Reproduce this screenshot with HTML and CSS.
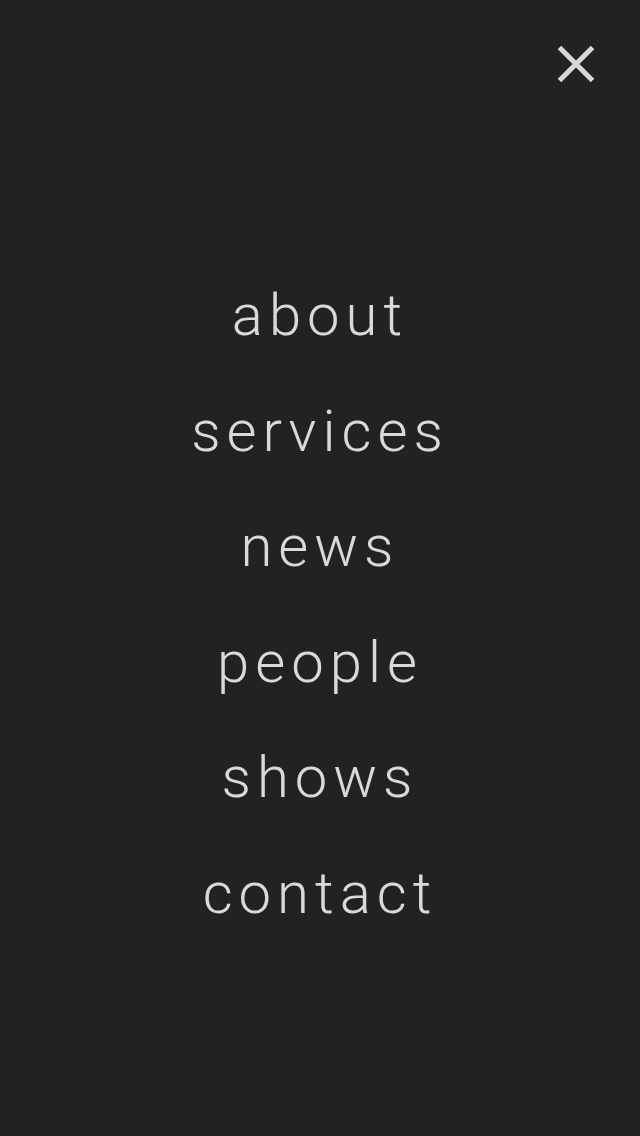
FILE: index.html
```html
<!DOCTYPE html>
<html lang="en">
<head>
<meta charset="utf-8">
<title>Menu</title>
<link rel="stylesheet" href="styles.css">
</head>
<body>
<div class="overlay">
  <header class="top">
    <button class="close" aria-label="Close menu">
      <svg width="40" height="40" viewBox="0 0 40 40"><path d="M3.5 3.5 L36.5 36.5 M36.5 3.5 L3.5 36.5" stroke="#d9d9d9" stroke-width="5" stroke-linecap="butt" fill="none"/></svg>
    </button>
  </header>
  <nav class="menu">
    <a class="item" href="#">about</a>
    <a class="item" href="#">services</a>
    <a class="item" href="#">news</a>
    <a class="item" href="#">people</a>
    <a class="item" href="#">shows</a>
    <a class="item" href="#">contact</a>
  </nav>
</div>
</body>
</html>
```
FILE: styles.css
```css
html, body {
  margin: 0;
  padding: 0;
  background: #222222;
}
.overlay {
  width: 640px;
  height: 1136px;
  display: flex;
  flex-direction: column;
  background: #222222;
}
.top {
  display: flex;
  justify-content: flex-end;
  padding: 44px 44px 0 0;
}
.close {
  background: none;
  border: 0;
  padding: 0;
  width: 40px;
  height: 40px;
  cursor: pointer;
}
.close svg { display: block; }
.menu {
  display: flex;
  flex-direction: column;
  align-items: center;
  padding-top: 174px;
}
.item {
  font-family: Roboto, "Liberation Sans", sans-serif;
  font-weight: 300;
  font-size: 58px;
  line-height: 115.5px;
  letter-spacing: 6px;
  color: #d9d9d9;
  text-decoration: none;
}
```
